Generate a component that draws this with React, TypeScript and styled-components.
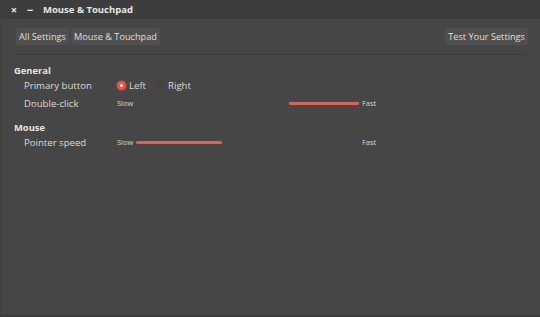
import React from "react";
import styled, { createGlobalStyle } from "styled-components";

const Global = createGlobalStyle`
  html, body { margin: 0; padding: 0; background: #464646; }
  body { font-family: "Open Sans", "DejaVu Sans", sans-serif; }
`;

const Window = styled.div`
  width: 540px;
  height: 317px;
  display: flex;
  flex-direction: column;
  background: #464646;
  color: #dfdbd2;
  box-sizing: border-box;
  border-bottom: 2px solid #3a3a3a;
  border-left: 1px solid #3f3f3f;
  overflow: hidden;
`;

const TitleBar = styled.div`
  height: 19px;
  display: flex;
  align-items: center;
  background: #3d3d3d;
  padding-left: 7px;
  flex-shrink: 0;
`;

const WinButton = styled.span`
  width: 12px;
  display: inline-flex;
  justify-content: center;
  align-items: center;
  color: #e8e8e8;
  font-size: 11px;
  font-weight: 700;
  margin-right: 4px;
`;

const Title = styled.span`
  margin-left: 3px;
  font-size: 9.5px;
  font-weight: 700;
  color: #e6e6e6;
`;

const Toolbar = styled.div`
  display: flex;
  align-items: center;
  padding: 9px 12px 9px 15px;
  flex-shrink: 0;
`;

const Crumbs = styled.div`
  display: flex;
  gap: 2px;
  flex: 1;
`;

const ToolButton = styled.div`
  height: 17px;
  padding: 0 3px;
  display: flex;
  align-items: center;
  background: #4f4f4f;
  border-radius: 2px;
  font-size: 9.2px;
  color: #e0ded8;
  white-space: nowrap;
`;

const Separator = styled.div`
  height: 1px;
  background: #3a3a3a;
  margin: 0 15px 0 16px;
  flex-shrink: 0;
`;

const Content = styled.div`
  padding: 11px 0 0 13px;
  display: flex;
  flex-direction: column;
`;

const SectionTitle = styled.div<{ $top?: number }>`
  font-size: 9.4px;
  font-weight: 700;
  color: #e6e4de;
  height: 10px;
  line-height: 10px;
  margin-top: ${(p) => p.$top ?? 0}px;
`;

const Row = styled.div`
  display: grid;
  grid-template-columns: 93px 1fr;
  align-items: center;
  height: 18px;
  padding-left: 10px;
`;

const Label = styled.div`
  font-size: 9.6px;
  color: #dcdad4;
`;

const RadioGroup = styled.div`
  display: flex;
  align-items: center;
`;

const RadioOption = styled.div`
  display: flex;
  align-items: center;
  gap: 3px;
  margin-right: 10px;
  font-size: 9.6px;
  color: #dcdad4;
`;

const RadioDot = styled.span<{ $on?: boolean }>`
  width: 9px;
  height: 9px;
  border-radius: 50%;
  box-sizing: border-box;
  background: ${(p) => (p.$on ? "#e2574c" : "#414141")};
  box-shadow: ${(p) => (p.$on ? "0 0 2px #e2574c" : "none")};
  display: inline-flex;
  align-items: center;
  justify-content: center;
  &::after {
    content: "";
    width: 3px;
    height: 3px;
    border-radius: 50%;
    background: ${(p) => (p.$on ? "#fbe7e4" : "transparent")};
  }
`;

const SliderWrap = styled.div`
  display: flex;
  align-items: center;
  font-size: 7.5px;
  color: #d8d6d0;
`;

const SmallText = styled.span`
  width: 17px;
`;

const Track = styled.div`
  position: relative;
  width: 226px;
  height: 3px;
  margin-right: 2px;
`;

const Fill = styled.div`
  position: absolute;
  top: 0;
  height: 3px;
  border-radius: 1.5px;
  background: #d8625b;
  box-shadow: 0 0 1px #b8504b;
`;

function Slider({ from, to }: { from: number; to: number }) {
  return (
    <SliderWrap>
      <SmallText>Slow</SmallText>
      <Track>
        <Fill style={{ left: from, width: to - from }} />
      </Track>
      <span>Fast</span>
    </SliderWrap>
  );
}

export default function App() {
  return (
    <>
      <Global />
      <Window>
        <TitleBar>
          <WinButton>×</WinButton>
          <WinButton>−</WinButton>
          <Title>Mouse &amp; Touchpad</Title>
        </TitleBar>
        <Toolbar>
          <Crumbs>
            <ToolButton>All Settings</ToolButton>
            <ToolButton>Mouse &amp; Touchpad</ToolButton>
          </Crumbs>
          <ToolButton>Test Your Settings</ToolButton>
        </Toolbar>
        <Separator />
        <Content>
          <SectionTitle>General</SectionTitle>
          <Row>
            <Label>Primary button</Label>
            <RadioGroup>
              <RadioOption>
                <RadioDot $on />
                Left
              </RadioOption>
              <RadioOption>
                <RadioDot />
                Right
              </RadioOption>
            </RadioGroup>
          </Row>
          <Row>
            <Label>Double-click</Label>
            <Slider from={155} to={225} />
          </Row>
          <SectionTitle $top={11}>Mouse</SectionTitle>
          <Row>
            <Label>Pointer speed</Label>
            <Slider from={2} to={88} />
          </Row>
        </Content>
      </Window>
    </>
  );
}
